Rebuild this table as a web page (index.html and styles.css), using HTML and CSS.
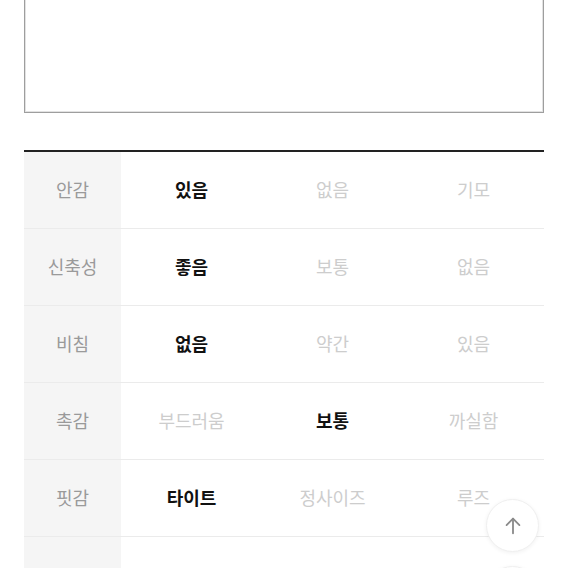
FILE: index.html
```html
<!DOCTYPE html>
<html lang="ko">
<head>
    <meta charset="UTF-8">
    <meta name="viewport" content="width=device-width, initial-scale=1.0">
    <title>상품 정보</title>
    <link rel="stylesheet" href="styles.css">
</head>
<body>
    <div class="page">
        <div class="memo-box"></div>

        <table class="fabric-table">
            <tr>
                <th>안감</th>
                <td class="on">있음</td>
                <td>없음</td>
                <td>기모</td>
            </tr>
            <tr>
                <th>신축성</th>
                <td class="on">좋음</td>
                <td>보통</td>
                <td>없음</td>
            </tr>
            <tr>
                <th>비침</th>
                <td class="on">없음</td>
                <td>약간</td>
                <td>있음</td>
            </tr>
            <tr>
                <th>촉감</th>
                <td>부드러움</td>
                <td class="on">보통</td>
                <td>까실함</td>
            </tr>
            <tr>
                <th>핏감</th>
                <td class="on">타이트</td>
                <td>정사이즈</td>
                <td>루즈</td>
            </tr>
            <tr>
                <th></th>
                <td></td>
                <td></td>
                <td></td>
            </tr>
        </table>
    </div>

    <div class="floating">
        <button class="float-btn" aria-label="맨 위로">
            <svg width="22" height="22" viewBox="0 0 24 24" fill="none" stroke="#8a8a8a" stroke-width="2" stroke-linecap="round" stroke-linejoin="round">
                <path d="M12 20V4"/>
                <path d="M5 11l7-7 7 7"/>
            </svg>
        </button>
        <button class="float-btn" aria-label="메뉴"></button>
    </div>
</body>
</html>
```

FILE: styles.css
```css
body {
    margin: 0;
    font-family: "Noto Sans CJK KR", "Noto Sans", sans-serif;
    background-color: #fff;
    overflow: hidden;
}
.page {
    padding: 0 24px;
}
.memo-box {
    height: 112px;
    border: 1px solid #9e9e9e;
    border-top: 0;
    box-shadow: inset 0 -1px 0 #e2e2e2, inset 1px 0 0 #e2e2e2, inset -1px 0 0 #e2e2e2;
}
.fabric-table {
    width: 100%;
    margin-top: 37px;
    border-collapse: collapse;
    border-top: 2px solid #222;
    table-layout: fixed;
}
.fabric-table th {
    width: 97px;
    background-color: #f5f5f5;
    color: #9a9a9a;
    font-weight: 400;
}
.fabric-table th,
.fabric-table td {
    height: 74px;
    border-bottom: 1px solid #ebebeb;
    text-align: center;
    vertical-align: middle;
    padding: 0 0 2px;
    font-size: 18px;
}
.fabric-table td {
    color: #cdcdcd;
}
.fabric-table td.on {
    color: #111;
    font-weight: 700;
}
.floating {
    position: fixed;
    right: 29px;
    top: 499px;
    display: flex;
    flex-direction: column;
    gap: 14px;
}
.float-btn {
    width: 53px;
    height: 53px;
    border-radius: 50%;
    border: 1px solid #efefef;
    background-color: #fff;
    box-shadow: 0 1px 4px rgba(0, 0, 0, 0.06);
    display: flex;
    align-items: center;
    justify-content: center;
    padding: 0;
}
```
